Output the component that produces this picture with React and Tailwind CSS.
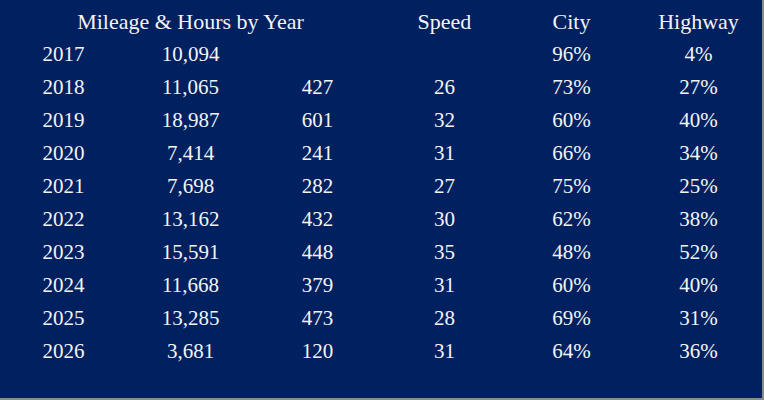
const ROWS = [
  ['2017', '10,094', '', '', '96%', '4%'],
  ['2018', '11,065', '427', '26', '73%', '27%'],
  ['2019', '18,987', '601', '32', '60%', '40%'],
  ['2020', '7,414', '241', '31', '66%', '34%'],
  ['2021', '7,698', '282', '27', '75%', '25%'],
  ['2022', '13,162', '432', '30', '62%', '38%'],
  ['2023', '15,591', '448', '35', '48%', '52%'],
  ['2024', '11,668', '379', '31', '60%', '40%'],
  ['2025', '13,285', '473', '28', '69%', '31%'],
  ['2026', '3,681', '120', '31', '64%', '36%'],
];

export default function App() {
  return (
    <div
      className="w-[764px] h-[400px] bg-[#002060] border-r-2 border-b-2 border-[#8c8c8c] text-[#f4f4f4] pt-[5px]"
      style={{ fontFamily: '"Liberation Serif", "Times New Roman", serif' }}
    >
      <div className="grid grid-cols-[repeat(6,127px)] auto-rows-[33px] text-[21px] leading-[33px] text-center">
        {/* Header */}
        <div className="col-span-3 text-[22px]">Mileage &amp; Hours by Year</div>
        <div className="text-[22px]">Speed</div>
        <div className="text-[22px]">City</div>
        <div className="text-[22px]">Highway</div>

        {ROWS.map(row =>
          row.map((cell, i) => (
            <div key={row[0] + '-' + i}>{cell}</div>
          ))
        )}
      </div>
    </div>
  );
}
